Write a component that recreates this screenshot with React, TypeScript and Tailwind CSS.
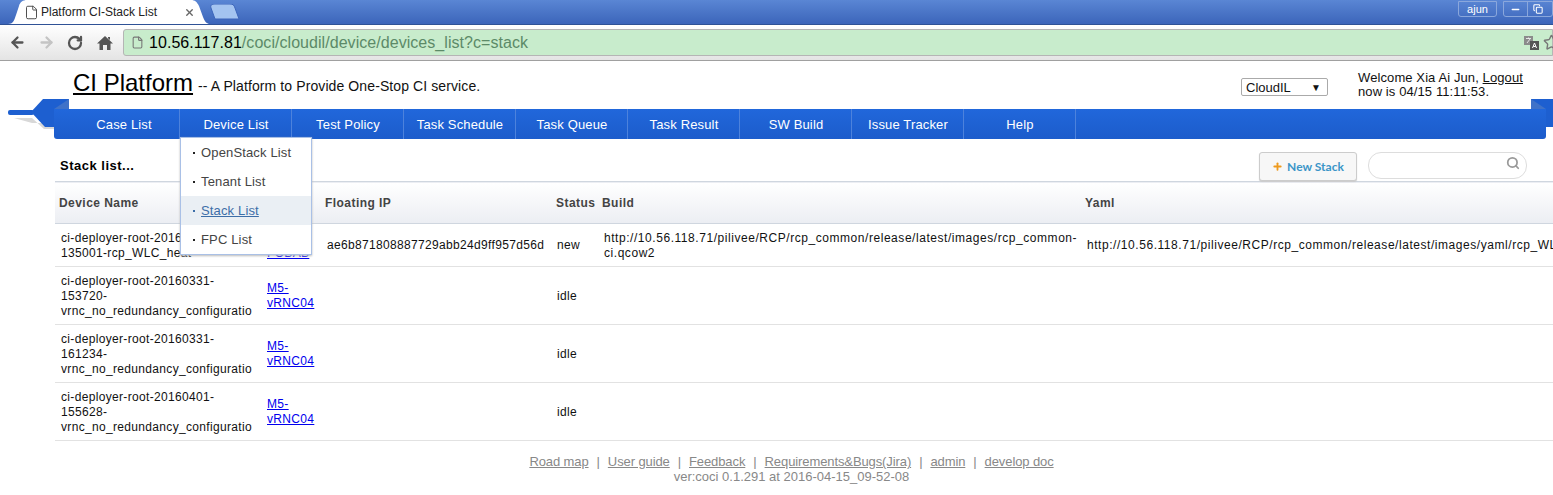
import { ArrowLeft, ArrowRight, Copy, File, Minus, Plus, RotateCw, Search, Star, X } from 'lucide-react'

const navItems = ['Case List', 'Device List', 'Test Policy', 'Task Schedule', 'Task Queue', 'Task Result', 'SW Build', 'Issue Tracker', 'Help']
const menuItems = ['OpenStack List', 'Tenant List', 'Stack List', 'FPC List']
const footerLinks = ['Road map', 'User guide', 'Feedback', 'Requirements&Bugs(Jira)', 'admin', 'develop doc']

const stacks = [
  {
    name: ['ci-deployer-root-20160331-', '135001-rcp_WLC_heat'],
    device: ['M5-', 'FOBAB'],
    ip: 'ae6b871808887729abb24d9ff957d56d',
    status: 'new',
    build: 'http://10.56.118.71/pilivee/RCP/rcp_common/release/latest/images/rcp_common-ci.qcow2',
    yaml: 'http://10.56.118.71/pilivee/RCP/rcp_common/release/latest/images/yaml/rcp_WLC',
    height: 'h-[43px]',
  },
  { name: ['ci-deployer-root-20160331-', '153720-', 'vrnc_no_redundancy_configuratio'], device: ['M5-', 'vRNC04'], status: 'idle', height: 'h-[58px]' },
  { name: ['ci-deployer-root-20160331-', '161234-', 'vrnc_no_redundancy_configuratio'], device: ['M5-', 'vRNC04'], status: 'idle', height: 'h-[58px]' },
  { name: ['ci-deployer-root-20160401-', '155628-', 'vrnc_no_redundancy_configuratio'], device: ['M5-', 'vRNC04'], status: 'idle', height: 'h-[58px]' },
]

export default function App() {
  return (
    <div className="w-[1553px] h-[495px] overflow-hidden bg-white text-[12px] leading-[15px] text-[#111] font-['Liberation_Sans',Arial,sans-serif]">
      <BrowserChrome />

      {/* header */}
      <div className="flex h-[48px] pl-[73px]">
        <div className="w-[1168px] pt-[8px] flex items-baseline">
          <a className="text-[24px] leading-[28px] text-black underline">CI Platform</a>
          <span className="ml-[5px] text-[14px] tracking-[0.1px]">-- A Platform to Provide One-Stop CI service.</span>
        </div>
        <div className="mt-[17px] w-[87px] h-[18px] border border-[#aaa] rounded-[2px] flex items-center justify-between pl-[4px] pr-[6px] text-[13px]">
          CloudIL
          <span className="text-[10px]">▼</span>
        </div>
        <div className="ml-[30px] mt-[10px] text-[13px] leading-[14px] tracking-[0.1px]">
          <div>Welcome Xia Ai Jun, <a className="underline">Logout</a></div>
          <div>now is 04/15 11:11:53.</div>
        </div>
      </div>

      <NavBar />

      {/* toolbar above the table */}
      <div className="ml-[55px] h-[42px] flex items-center relative">
        <b className="ml-[5px] mt-[10px] text-[13px] tracking-[0.5px] text-black">Stack list...</b>
        <button className="absolute left-[1204px] top-[13px] w-[98px] h-[29px] border border-[#ccc] rounded-[3px] bg-[#f7f7f7] shadow-[0_1px_1px_#ccc] flex items-center justify-center gap-[4px] text-[12px] font-bold text-[#3b95c8] font-['Lato',sans-serif]">
          <Plus size={11} strokeWidth={4} className="text-[#ee9a1e]" />
          New Stack
        </button>
        <div className="absolute left-[1313px] top-[13px] w-[159px] h-[27px] border border-[#ddd] rounded-[13px] flex justify-end pr-[6px] pt-[3px]">
          <Search size={14} strokeWidth={3} className="text-[#999]" />
        </div>
      </div>

      <StackTable />

      {/* footer */}
      <div className="mt-[13px] pl-[30px] text-center text-[#888] text-[13px] leading-[15px]">
        <div className="tracking-[-0.1px]">
          {footerLinks.map((link, i) => (
            <span key={link}>
              {i > 0 && <span className="mx-[8px]">|</span>}
              <a className="underline">{link}</a>
            </span>
          ))}
        </div>
        <div>ver:coci 0.1.291 at 2016-04-15_09-52-08</div>
      </div>
    </div>
  )
}

function BrowserChrome() {
  return (
    <div className="border-b border-[#a0a0a0]">
      {/* tabs */}
      <div className="h-[25px] bg-gradient-to-b from-[#5a86d4] to-[#3c65ba] border-b border-[#2f5296] flex items-end pl-[8px]">
        <div className="relative w-[202px] h-[24px] flex items-center pl-[16px] pr-[15px] text-[12px] text-[#222]">
          <svg className="absolute left-0 top-0" width="202" height="24" viewBox="0 0 202 24">
            <path d="M0 24 C5 24 6 21 8 15 L11 6 C12 2 15 0 19 0 L183 0 C187 0 189 2 191 6 L195 17 C197 22 199 24 202 24 Z" fill="#fff" />
          </svg>
          <File size={15} strokeWidth={1.5} className="relative text-[#444]" />
          <span className="relative ml-[2px]">Platform CI-Stack List</span>
          <X size={11} strokeWidth={3} className="relative ml-auto text-[#666]" />
        </div>
        <svg className="-ml-[2px] mb-[4px]" width="32" height="16" viewBox="0 0 32 16">
          <path d="M7 15 L3 4 C2 1 4 0 7 0 L22 0 C25 0 26 1 27 4 L31 15 Z" fill="#a4c4f0" stroke="#3c65ba" />
        </svg>
        <div className="ml-auto mb-[7px] flex items-start gap-[6px]">
          <span className="w-[39px] h-[16px] border border-[#8aa7dc] rounded-b-[3px] text-center text-[11px] leading-[14px] text-white">ajun</span>
          <div className="flex border border-[#8aa7dc] rounded-b-[3px] h-[16px] pr-[4px]">
            <span className="w-[24px] border-r border-[#8aa7dc] flex items-center justify-center"><Minus size={11} strokeWidth={3} className="text-white" /></span>
            <span className="w-[20px] flex items-center justify-center"><Copy size={10} strokeWidth={2.5} className="text-white" /></span>
          </div>
        </div>
      </div>
      {/* address bar */}
      <div className="h-[35px] bg-gradient-to-b from-white to-[#e4e4e4] flex items-center pl-[9px]">
        <ArrowLeft size={17} strokeWidth={3.2} className="text-[#555]" />
        <ArrowRight size={17} strokeWidth={3.2} className="ml-[12px] text-[#c4c4c4]" />
        <RotateCw size={16} strokeWidth={3.4} className="ml-[12px] text-[#555]" />
        <svg className="ml-[14px]" width="16" height="16" viewBox="0 0 16 16">
          <path d="M8 1 L16 8.5 L13.5 8.5 L13.5 15 L10 15 L10 10 L6 10 L6 15 L2.5 15 L2.5 8.5 L0 8.5 Z M11 2 L13 2 L13 5 L11 3.2 Z" fill="#555" />
        </svg>
        <div className="ml-[10px] flex-1 h-[27px] bg-[#c8eccc] border border-[#b5b5b5] rounded-l-[3px] flex items-center pl-[7px] text-[16px] tracking-[0.05px] text-[#5c8a68]">
          <File size={13} className="text-[#777] mr-[5px]" />
          <span className="text-black">10.56.117.81</span>/coci/cloudil/device/devices_list?c=stack
          <svg className="ml-auto" width="16" height="16" viewBox="0 0 16 16">
            <rect x="0" y="1" width="9" height="9" fill="#8b8b8b" />
            <rect x="6" y="6" width="9" height="9" fill="#555" />
            <path d="M2 3.5 L7 3.5 M4.5 2.5 L4.5 4 M3 8 L6 4" stroke="#eee" strokeWidth="0.9" fill="none" />
            <path d="M8.5 13 L10.5 8 L12.5 13 M9.3 11.5 L11.7 11.5" stroke="#fff" strokeWidth="1" fill="none" />
          </svg>
          <Star size={17} className="ml-[3px] -mr-[8px] text-[#777]" />
        </div>
      </div>
    </div>
  )
}

function NavBar() {
  return (
    <div className="relative h-[30px] ml-[54px] w-[1492px]">
      {/* ribbon ends */}
      <svg className="absolute -left-[54px] -top-[10px]" width="70" height="36" viewBox="0 0 70 36">
        <polygon points="14,19 32,19 44,30 58,30 58,24 32,24" fill="#d8d8d8" />
        <rect x="8" y="11" width="26" height="5" rx="2" fill="#1d5fd0" />
        <polygon points="31,13 43,0 69,0 69,28 45,28" fill="#1d5fd0" />
        <polygon points="54,10 69,0 69,10" fill="#3f72c8" />
      </svg>
      <svg className="absolute -right-[7px] -top-[10px]" width="22" height="28" viewBox="0 0 22 28">
        <rect width="22" height="28" fill="#1d5fd0" />
        <polygon points="0,0 15,10 0,10" fill="#3f72c8" />
      </svg>

      <div className="relative h-full pl-[14px] flex rounded-b-[3px] bg-gradient-to-b from-[#2167db] to-[#1c5ccb] text-white text-[13px] tracking-[0.15px]">
        {navItems.map((item) => (
          <div key={item} className="w-[112px] pl-[1px] flex items-center justify-center border-r border-[#4d82dc]">
            {item}
          </div>
        ))}
      </div>

      {/* open device menu */}
      <div className="absolute z-10 left-[126px] top-[28px] w-[132px] h-[118px] bg-white border border-[#a9c0e6] shadow-[0_1px_2px_#bbb] text-[13px] tracking-[0.15px] text-[#444]">
        {menuItems.map((item) => (
          <div key={item} className={`h-[29px] flex items-center pl-[12px] ${item === 'Stack List' ? 'bg-[#eaeff4] text-[#3d6ea8]' : ''}`}>
            <span className={`w-[2px] h-[2px] mr-[6px] ${item === 'Stack List' ? 'bg-[#3d6ea8]' : 'bg-[#222]'}`} />
            <span className={item === 'Stack List' ? 'underline' : ''}>{item}</span>
          </div>
        ))}
      </div>
    </div>
  )
}

function StackTable() {
  return (
    <div className="ml-[55px] overflow-hidden">
      <table className="table-fixed w-[1540px] border-collapse tracking-[0.33px]">
        <colgroup>
          <col className="w-[208px]" />
          <col className="w-[58px]" />
          <col className="w-[230px]" />
          <col className="w-[50px]" />
          <col className="w-[483px]" />
          <col />
        </colgroup>
        <thead>
          <tr className="h-[42px] bg-gradient-to-b from-white to-[#eceef3] border-y border-[#cfd6df] text-left text-[#444] font-bold tracking-[0.45px]">
            <th className="pl-[4px] pt-[1px]">Device Name</th>
            <th />
            <th className="pl-[4px] pt-[1px]">Floating IP</th>
            <th className="pl-[5px] pt-[1px]">Status</th>
            <th className="pl-[1px] pt-[1px]">Build</th>
            <th className="pl-[1px] pt-[1px]">Yaml</th>
          </tr>
        </thead>
        <tbody>
          {stacks.map((stack) => (
            <tr key={stack.name.join('')} className={`${stack.height} border-b border-[#e2e2e2]`}>
              <td className="pl-[6px] pt-[1px] overflow-hidden whitespace-nowrap">
                {stack.name.map((line) => <div key={line}>{line}</div>)}
              </td>
              <td className="pl-[4px] pt-[1px]">
                <a className="text-[#00e] underline block">{stack.device[0]}</a>
                <a className="text-[#00e] underline block">{stack.device[1]}</a>
              </td>
              <td className="pl-[6px] pt-[1px] whitespace-nowrap">{stack.ip}</td>
              <td className="pl-[6px] pt-[1px]">{stack.status}</td>
              <td className="pl-[3px] pr-[4px] pt-[1px] tracking-[0.55px]">{stack.build}</td>
              <td className="pl-[3px] pt-[1px] whitespace-nowrap tracking-[0.55px]">{stack.yaml}</td>
            </tr>
          ))}
        </tbody>
      </table>
    </div>
  )
}
